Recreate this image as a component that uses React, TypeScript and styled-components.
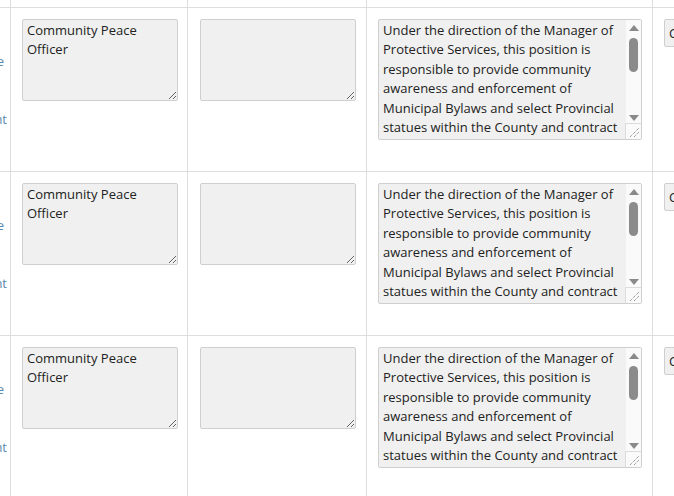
import styled, { createGlobalStyle } from 'styled-components';

const GlobalStyle = createGlobalStyle`
  html, body {
    margin: 0;
    padding: 0;
    background: #fff;
    overflow: hidden;
  }
  body {
    font-family: "Open Sans", "Liberation Sans", sans-serif;
    font-size: 13px;
    line-height: 1.5;
    color: #222;
  }
`;

const Viewport = styled.div`
  width: 674px;
  height: 496px;
  overflow: hidden;
`;

const Table = styled.div`
  margin-top: -156px;
  margin-left: -79px;
  width: 900px;
`;

const Row = styled.div`
  display: grid;
  grid-template-columns: 90px 177px 179px 286px 1fr;
  height: 164px;
  border-bottom: 1px solid #ddd;
  box-sizing: border-box;
`;

const Cell = styled.div<{ $padLeft?: number }>`
  box-sizing: border-box;
  border-right: 1px solid #ddd;
  padding: 11px 0 0 ${(p) => p.$padLeft ?? 11}px;
  overflow: hidden;
`;

const ActionCell = styled.div`
  box-sizing: border-box;
  border-right: 1px solid #ddd;
  padding: 44px 0 0 0;
  text-align: right;
  overflow: hidden;
`;

const ActionLink = styled.a<{ $gap?: number; $inset: number }>`
  display: block;
  color: #5a87aa;
  text-decoration: none;
  white-space: nowrap;
  margin-top: ${(p) => p.$gap ?? 0}px;
  margin-right: ${(p) => p.$inset}px;
`;

const TextBox = styled.textarea<{ $w: number; $h: number; $scroll?: boolean }>`
  display: block;
  box-sizing: border-box;
  width: ${(p) => p.$w}px;
  height: ${(p) => p.$h}px;
  margin: 0;
  padding: 1px ${(p) => (p.$scroll ? 19 : 4)}px 1px 4px;
  border: 1px solid #cfcfcf;
  border-radius: 2px;
  background: #f0f0f0;
  font-family: "Open Sans", "Liberation Sans", sans-serif;
  font-size: 13px;
  line-height: 19.4px;
  color: #222;
  resize: ${(p) => (p.$scroll ? 'none' : 'both')};
  overflow: hidden;
  outline: none;
`;

/* the long description box shows its scroll bar, drawn over the textarea */
const ScrollBox = styled.div`
  position: relative;
  width: 264px;
`;

const ScrollBar = styled.div`
  position: absolute;
  top: 1px;
  right: 1px;
  bottom: 15px;
  width: 15px;
  background: #fafafa;
  display: flex;
  flex-direction: column;
  pointer-events: none;
`;

const ArrowButton = styled.div<{ $dir: 'up' | 'down' }>`
  height: 15px;
  display: flex;
  align-items: center;
  justify-content: center;

  &::before {
    content: '';
    width: 0;
    height: 0;
    border-left: 5px solid transparent;
    border-right: 5px solid transparent;
    ${(p) =>
      p.$dir === 'up'
        ? 'border-bottom: 6px solid #8a8a8a; margin-top: 1px;'
        : 'border-top: 6px solid #8a8a8a; margin-top: 0;'}
  }
`;

const Track = styled.div`
  flex: 1;
  padding-top: 3px;
`;

const Thumb = styled.div`
  width: 9px;
  height: 34px;
  margin-left: 3px;
  border-radius: 4.5px;
  background: #8b8b8b;
`;

const Corner = styled.div`
  position: absolute;
  right: 1px;
  bottom: 1px;
  width: 16px;
  height: 16px;
  box-sizing: border-box;
  border-top: 1px solid #dcdcdc;
  border-left: 1px solid #dcdcdc;
  background: #fafafa;
  pointer-events: none;
`;

const TitleInput = styled.input`
  display: block;
  box-sizing: border-box;
  width: 200px;
  height: 28px;
  margin: 0;
  padding: 0 4px;
  border: 1px solid #cfcfcf;
  border-radius: 2px;
  background: #f0f0f0;
  font-family: "Open Sans", "Liberation Sans", sans-serif;
  font-size: 13px;
  color: #222;
  outline: none;
`;

const description =
  'Under the direction of the Manager of Protective Services, this position is responsible to provide community awareness and enforcement of Municipal Bylaws and select Provincial statues within the County and contract municipalities. The Community Peace Officer works closely with the RCMP and other agencies to promote public safety, respond to complaints and conduct patrols.';

const rows = [1, 2, 3, 4];

function Grip() {
  return (
    <svg width="15" height="15" viewBox="0 0 15 15">
      <path d="M4 13 L13 4 M8 13 L13 8" stroke="#777" strokeWidth="1" strokeDasharray="1 1" />
    </svg>
  );
}

export default function App() {
  return (
    <Viewport>
      <GlobalStyle />
      <Table>
        {rows.map((id) => (
          <Row key={id}>
            <ActionCell>
              <ActionLink href="#" $inset={6}>Delete</ActionLink>
              <ActionLink href="#" $gap={38} $inset={3}>Attachment</ActionLink>
            </ActionCell>
            <Cell>
              <TextBox $w={156} $h={82} defaultValue="Community Peace Officer" />
            </Cell>
            <Cell $padLeft={12}>
              <TextBox $w={156} $h={82} defaultValue="" />
            </Cell>
            <Cell>
              <ScrollBox>
                <TextBox $w={264} $h={121} $scroll defaultValue={description} />
                <ScrollBar>
                  <ArrowButton $dir="up" />
                  <Track>
                    <Thumb />
                  </Track>
                  <ArrowButton $dir="down" />
                </ScrollBar>
                <Corner>
                  <Grip />
                </Corner>
              </ScrollBox>
            </Cell>
            <Cell>
              <TitleInput defaultValue="Community Peace Officer" />
            </Cell>
          </Row>
        ))}
      </Table>
    </Viewport>
  );
}
